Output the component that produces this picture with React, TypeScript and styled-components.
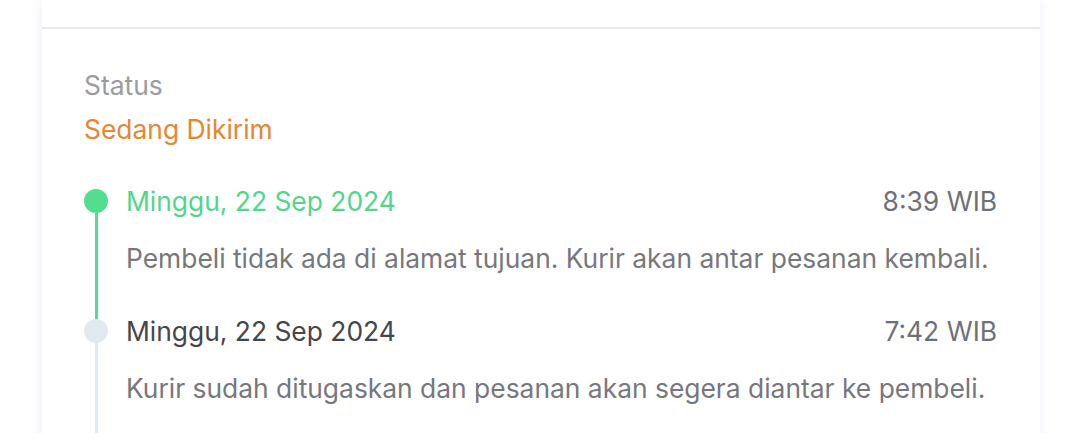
import React from "react";
import styled, { createGlobalStyle } from "styled-components";

const Global = createGlobalStyle`
  html, body { margin: 0; padding: 0; background: #ffffff; }
  body { font-family: Inter, "Noto Sans", sans-serif; -webkit-font-smoothing: antialiased; }
`;

const Page = styled.div`
  padding: 0 40px 0 42px;
  height: 433px;
  overflow: hidden;
`;

const Card = styled.div`
  width: 998px;
  background: #ffffff;
  box-shadow: 0 0 10px rgba(110, 120, 200, 0.12);
  min-height: 460px;
`;

const TopSection = styled.div`
  height: 27px;
  border-bottom: 2px solid #e6eaf0;
`;

const Body = styled.div`
  padding: 38px 43px 0 42px;
`;

const Label = styled.div`
  font-size: 26.4px;
  line-height: 36px;
  color: #9b9ba0;
`;

const StatusValue = styled.div`
  font-size: 26.4px;
  line-height: 36px;
  color: #e8862f;
  margin-top: 8px;
`;

const Timeline = styled.div`
  margin-top: 38px;
  display: flex;
  flex-direction: column;
`;

const Item = styled.div`
  display: grid;
  grid-template-columns: 42px 1fr;
  height: 130px;
`;

const Rail = styled.div`
  position: relative;
  display: flex;
  justify-content: center;
  width: 24px;
`;

const Dot = styled.div<{ $active: boolean }>`
  position: absolute;
  top: 4px;
  left: 0;
  width: 24px;
  height: 24px;
  border-radius: 50%;
  background: ${(p) => (p.$active ? "#52dd8f" : "#e2e8f0")};
  z-index: 1;
`;

const Line = styled.div<{ $active: boolean }>`
  margin-top: 16px;
  width: 3px;
  height: 130px;
  background: ${(p) => (p.$active ? "#52dd8f" : "#e2e8f0")};
`;

const Content = styled.div`
  display: flex;
  flex-direction: column;
`;

const Head = styled.div`
  display: flex;
  justify-content: space-between;
  align-items: center;
  font-size: 26.4px;
  line-height: 32px;
`;

const DateText = styled.span<{ $active: boolean }>`
  color: ${(p) => (p.$active ? "#52d68c" : "#46464b")};
`;

const TimeText = styled.span`
  color: #707078;
`;

const Desc = styled.div`
  margin-top: 25px;
  font-size: 26.4px;
  line-height: 32px;
  color: #77777e;
`;

const events = [
  {
    date: "Minggu, 22 Sep 2024",
    time: "8:39 WIB",
    desc: "Pembeli tidak ada di alamat tujuan. Kurir akan antar pesanan kembali.",
    active: true,
  },
  {
    date: "Minggu, 22 Sep 2024",
    time: "7:42 WIB",
    desc: "Kurir sudah ditugaskan dan pesanan akan segera diantar ke pembeli.",
    active: false,
  },
];

export default function App() {
  return (
    <>
      <Global />
      <Page>
        <Card>
          <TopSection />
          <Body>
            <Label>Status</Label>
            <StatusValue>Sedang Dikirim</StatusValue>
            <Timeline>
              {events.map((e, i) => (
                <Item key={i}>
                  <Rail>
                    <Dot $active={e.active} />
                    <Line $active={e.active} />
                  </Rail>
                  <Content>
                    <Head>
                      <DateText $active={e.active}>{e.date}</DateText>
                      <TimeText>{e.time}</TimeText>
                    </Head>
                    <Desc>{e.desc}</Desc>
                  </Content>
                </Item>
              ))}
            </Timeline>
          </Body>
        </Card>
      </Page>
    </>
  );
}
